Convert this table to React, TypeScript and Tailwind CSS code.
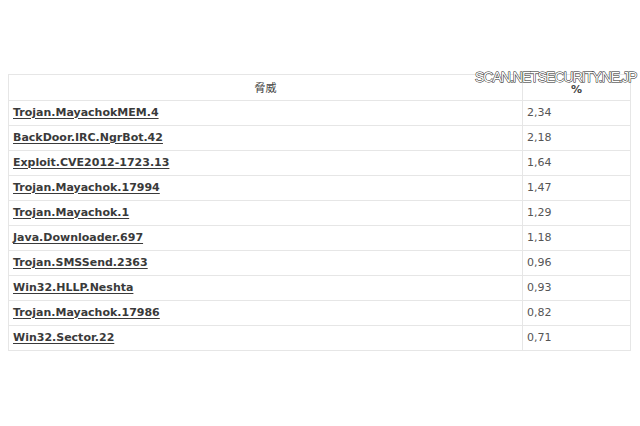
const rows: [string, string][] = [
  ["Trojan.MayachokMEM.4", "2,34"],
  ["BackDoor.IRC.NgrBot.42", "2,18"],
  ["Exploit.CVE2012-1723.13", "1,64"],
  ["Trojan.Mayachok.17994", "1,47"],
  ["Trojan.Mayachok.1", "1,29"],
  ["Java.Downloader.697", "1,18"],
  ["Trojan.SMSSend.2363", "0,96"],
  ["Win32.HLLP.Neshta", "0,93"],
  ["Trojan.Mayachok.17986", "0,82"],
  ["Win32.Sector.22", "0,71"],
];

export default function App() {
  return (
    <div className="w-[640px] h-[426px] bg-white relative overflow-hidden" style={{ fontFamily: '"DejaVu Sans", Verdana, sans-serif' }}>
      <div className="pt-[74px] pl-[8px]">
        <table className="w-[623px] border-collapse text-[11px]">
          <thead>
            <tr className="h-[26px]">
              <th className="border border-[#e6e6e6] font-normal text-[#444] text-center w-[514px] text-[11px]" style={{ fontFamily: '"Noto Sans CJK JP", sans-serif' }}>脅威</th>
              <th className="border border-[#e6e6e6] font-bold text-[#444] text-center text-[11px] pt-[6px]">%</th>
            </tr>
          </thead>
          <tbody>
            {rows.map(([n, v]) => (
              <tr key={n} className="h-[25px]">
                <td className="border border-[#e6e6e6] pl-[4px] font-bold text-[#3a3a3a] underline decoration-1 underline-offset-2">{n}</td>
                <td className="border border-[#e6e6e6] pl-[4px] text-[#555]">{v}</td>
              </tr>
            ))}
          </tbody>
        </table>
      </div>
      <div
        className="absolute left-[475px] top-[69px] text-[14px] leading-[16px] text-white tracking-[-1px] whitespace-nowrap"
        style={{ fontFamily: '"Liberation Sans", Arial, sans-serif', WebkitTextStroke: "1px #222", paintOrder: "stroke fill" }}
      >
        SCAN.NETSECURITY.NE.JP
      </div>
    </div>
  );
}
